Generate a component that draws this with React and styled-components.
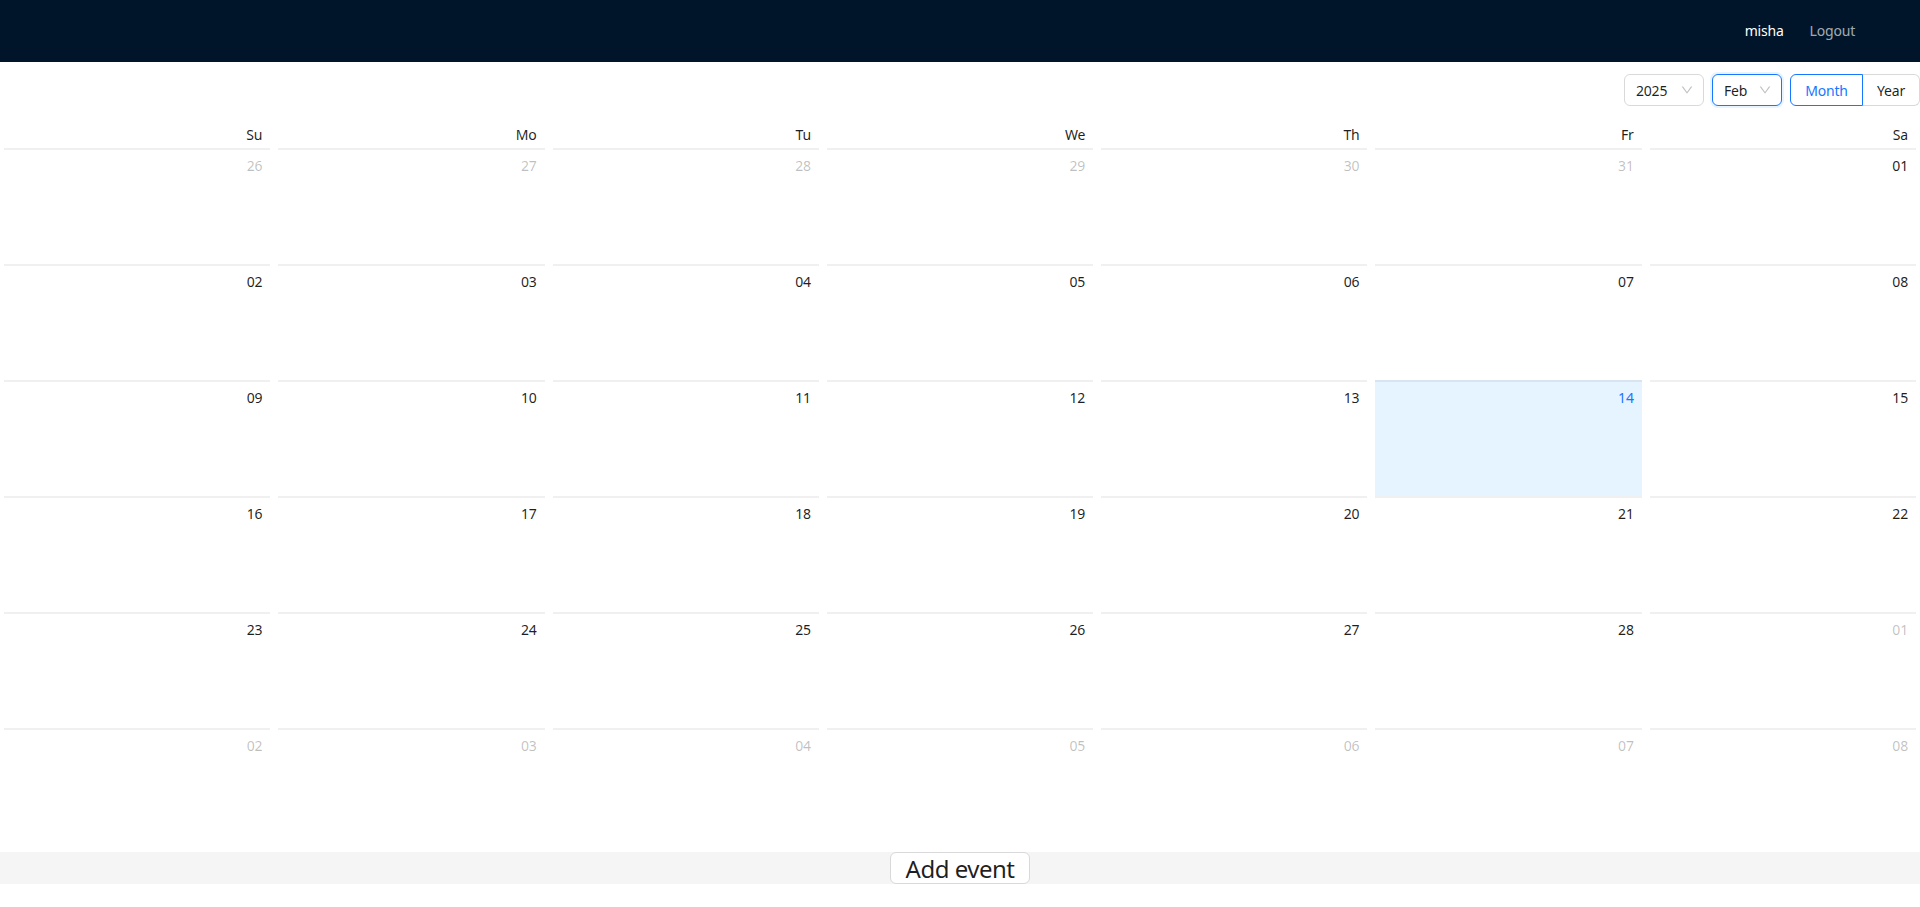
import React from "react";
import styled, { createGlobalStyle } from "styled-components";
import { AiOutlineDown } from "react-icons/ai";

const Global = createGlobalStyle`
  html, body { margin: 0; padding: 0; background: #fff; }
  body {
    font-family: "Noto Sans", "Open Sans", "Liberation Sans", sans-serif;
    font-size: 14px;
    letter-spacing: -0.2px;
    color: rgba(0, 0, 0, 0.88);
  }
`;

const Page = styled.div`
  display: flex;
  flex-direction: column;
  min-height: 907px;
`;

const TopBar = styled.header`
  height: 62px;
  background: #001529;
  display: flex;
  align-items: center;
  justify-content: flex-end;
  padding: 0 65px 2px 0;
  box-sizing: border-box;
  gap: 26px;
`;

const UserName = styled.span`
  color: #fff;
`;

const LogoutLink = styled.a`
  color: rgba(255, 255, 255, 0.65);
`;

const Toolbar = styled.div`
  display: flex;
  justify-content: flex-end;
  align-items: center;
  gap: 8px;
  padding: 12px 0;
`;

const SelectBox = styled.div`
  box-sizing: border-box;
  height: 32px;
  width: ${(p) => p.$width}px;
  padding: 0 9px 0 11px;
  display: flex;
  align-items: center;
  justify-content: space-between;
  border-radius: 6px;
  border: 1px solid ${(p) => (p.$focused ? "#1677ff" : "#d9d9d9")};
  box-shadow: ${(p) => (p.$focused ? "0 0 0 2px rgba(5, 145, 255, 0.1)" : "none")};
  svg {
    width: 14px;
    height: 14px;
    color: rgba(0, 0, 0, 0.25);
  }
`;

const RadioGroup = styled.div`
  display: flex;
  height: 32px;
`;

const RadioButton = styled.div`
  box-sizing: border-box;
  height: 32px;
  width: ${(p) => p.$width}px;
  display: flex;
  align-items: center;
  justify-content: center;
  border: 1px solid ${(p) => (p.$active ? "#1677ff" : "#d9d9d9")};
  color: ${(p) => (p.$active ? "#1677ff" : "inherit")};
  border-radius: ${(p) => (p.$active ? "6px 0 0 6px" : "0 6px 6px 0")};
  ${(p) => !p.$active && "border-left: 0;"}
`;

const Grid = styled.div`
  display: grid;
  grid-template-columns: repeat(7, 1fr);
`;

const WeekDay = styled.div`
  text-align: right;
  height: 30px;
  line-height: 18px;
  padding: 8px 12px 0 0;
  box-sizing: border-box;
`;

const DayCell = styled.div`
  box-sizing: border-box;
  margin: 0 4px;
  height: 116px;
  padding: 4px 8px 0;
  border-top: 2px solid rgba(5, 5, 5, 0.06);
  text-align: right;
  line-height: 24px;
  color: ${(p) =>
    p.$today ? "#1677ff" : p.$muted ? "rgba(0, 0, 0, 0.25)" : "rgba(0, 0, 0, 0.88)"};
  background: ${(p) => (p.$today ? "#e6f4ff" : "transparent")};
`;

const Footer = styled.div`
  margin-top: 8px;
  height: 32px;
  background: #f5f5f5;
  display: flex;
  justify-content: center;
`;

const AddButton = styled.button`
  box-sizing: border-box;
  height: 32px;
  padding: 1px 0 0;
  width: 140px;
  font-family: inherit;
  font-size: 24px;
  letter-spacing: -0.5px;
  line-height: 30px;
  color: rgba(0, 0, 0, 0.88);
  background: #fff;
  border: 1px solid #d9d9d9;
  border-radius: 6px;
  white-space: nowrap;
`;

const days = ["Su", "Mo", "Tu", "We", "Th", "Fr", "Sa"];
const pad = (n) => String(n).padStart(2, "0");
const cells = [
  ...[26, 27, 28, 29, 30, 31].map((d) => ({ d, muted: true })),
  ...Array.from({ length: 28 }, (_, i) => ({ d: i + 1, today: i + 1 === 14 })),
  ...[1, 2, 3, 4, 5, 6, 7, 8].map((d) => ({ d, muted: true })),
];

export default function App() {
  return (
    <Page>
      <Global />
      <TopBar>
        <UserName>misha</UserName>
        <LogoutLink>Logout</LogoutLink>
      </TopBar>
      <Toolbar>
        <SelectBox $width={80}>
          2025
          <AiOutlineDown />
        </SelectBox>
        <SelectBox $width={70} $focused>
          Feb
          <AiOutlineDown />
        </SelectBox>
        <RadioGroup>
          <RadioButton $width={73} $active>
            Month
          </RadioButton>
          <RadioButton $width={57}>Year</RadioButton>
        </RadioGroup>
      </Toolbar>
      <Grid>
        {days.map((d) => (
          <WeekDay key={d}>{d}</WeekDay>
        ))}
        {cells.map((c, i) => (
          <DayCell key={i} $muted={c.muted} $today={c.today}>
            {pad(c.d)}
          </DayCell>
        ))}
      </Grid>
      <Footer>
        <AddButton>Add event</AddButton>
      </Footer>
    </Page>
  );
}
